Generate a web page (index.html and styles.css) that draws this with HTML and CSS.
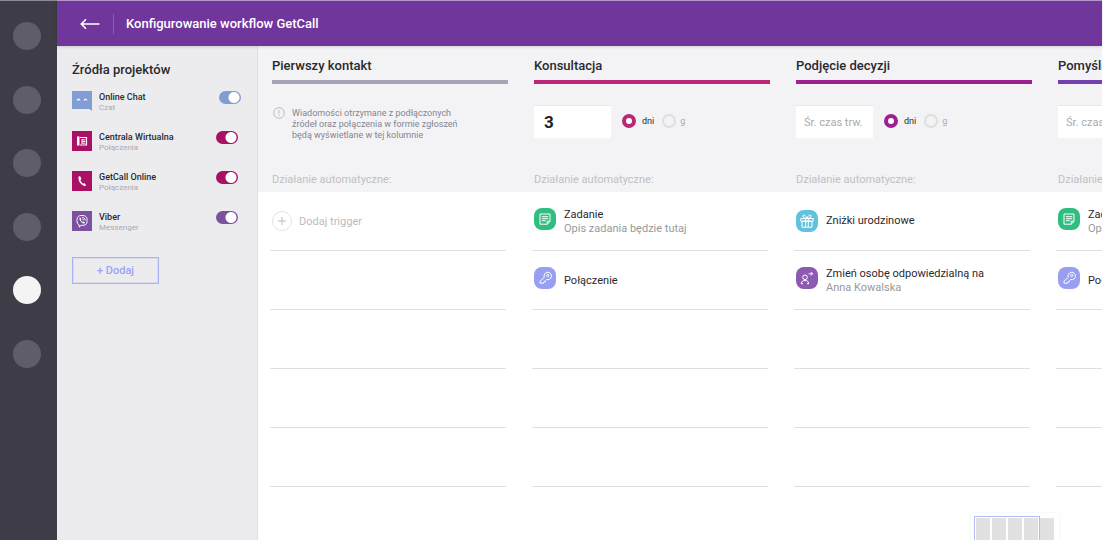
FILE: index.html
```html
<!DOCTYPE html>
<html lang="pl">
<head>
<meta charset="utf-8">
<title>Konfigurowanie workflow GetCall</title>
<link rel="stylesheet" href="styles.css">
</head>
<body>
<svg class="sprite" aria-hidden="true">
  <symbol id="i-task" viewBox="0 0 22 22">
    <path d="M6 6h10v7.500l-2.800 2.700H6z M16 13.200h-2.800v3"/><path d="M7.800 8.700h6.400M7.800 10.700h6.400M7.800 12.700h4"/>
  </symbol>
  <symbol id="i-key" viewBox="0 0 22 22">
    <path d="M10.300 10.300a3.700 3.700 0 1 1 2.300 2.200l-1 .9-.2 1.300-1.500.1-.3 1.400H6v-2z"/><circle cx="13.700" cy="8.500" r="1.100"/>
  </symbol>
  <symbol id="i-gift" viewBox="0 0 22 22">
    <path d="M4.800 8.500h12.400v2.700H4.800zM6 11.200h10v6H6zM9.700 8.500v8.700M12.300 8.500v8.700M11 8.300C9.800 5 7.200 4 6.900 5.900c-.2 1.600 1.700 2.400 4.100 2.400 2.400 0 4.300-.8 4.100-2.400C14.800 4 12.200 5 11 8.300z"/>
  </symbol>
  <symbol id="i-person" viewBox="0 0 22 22">
    <circle cx="9" cy="10.300" r="2.300"/><path d="M5.300 16.700c.2-2.300 1.500-3.200 3.700-3.200s3.500.9 3.700 3.200M5 16.700h2M11 16.700h2M12.500 6.800h4M14.800 5l1.800 1.800-1.800 1.800"/>
  </symbol>
</svg>
<div class="app">
  <nav class="rail" aria-label="Menu">
    <div class="dots">
      <button class="dot" aria-label="Pozycja 1"></button>
      <button class="dot" aria-label="Pozycja 2"></button>
      <button class="dot" aria-label="Pozycja 3"></button>
      <button class="dot" aria-label="Pozycja 4"></button>
      <button class="dot dot-active" aria-label="Pozycja 5"></button>
      <button class="dot" aria-label="Pozycja 6"></button>
    </div>
  </nav>
  <div class="page">
    <header class="topbar">
      <button class="back" aria-label="Wstecz"><svg viewBox="0 0 20 12"><path d="M19.500 6H1.500M6 1.300 1.300 6 6 10.700"/></svg></button>
      <h1 class="title">Konfigurowanie workflow GetCall</h1>
    </header>
    <div class="content">
      <aside class="sources">
        <h2 class="heading">Źródła projektów</h2>
        <ul class="source-list">
          <li class="source blue">
            <svg class="source-icon" viewBox="0 0 20 20"><path class="fill" d="M0 0h20v20l-2.500-2H0z"/><path class="line" d="M5 9.500q1.500-2.600 3 0M12 9.500q1.500-2.600 3 0"/></svg>
            <label class="source-text" for="s1"><span class="source-name">Online Chat</span><span class="source-kind">Czat</span></label>
            <input class="toggle" id="s1" type="checkbox" role="switch" checked>
          </li>
          <li class="source pink">
            <svg class="source-icon" viewBox="0 0 20 20"><path class="fill" d="M0 0h20v20H0z"/><path class="solid" d="M5 5.500h2.500v9H5z"/><path class="line" d="M8 6.500h6.500v7.500H8"/><path class="line thin" d="M10 8.800h3.500M10.300 10.500h3M10.300 12.200h3M10 8v5"/></svg>
            <label class="source-text" for="s2"><span class="source-name">Centrala Wirtualna</span><span class="source-kind">Połączenia</span></label>
            <input class="toggle" id="s2" type="checkbox" role="switch" checked>
          </li>
          <li class="source pink">
            <svg class="source-icon" viewBox="0 0 20 20"><path class="fill" d="M0 0h20v20H0z"/><path class="solid" d="m6.500 5.600 1.700-.3 1.200 2.800-1 1c.6 1.700 1.400 2.700 2.700 3.600l1.200-.6 1.800 1.900-1.200 1.200C8.700 14.200 6 10.300 6.500 5.600z"/></svg>
            <label class="source-text" for="s3"><span class="source-name">GetCall Online</span><span class="source-kind">Połączenia</span></label>
            <input class="toggle" id="s3" type="checkbox" role="switch" checked>
          </li>
          <li class="source violet">
            <svg class="source-icon" viewBox="0 0 20 20"><path class="fill" d="M0 0h20v20H0z"/><path class="line thin" d="M10 4.500c-4 0-5 1.500-5 5 0 2.300.6 3.700 2.200 4.400v2.200l1.900-1.800c4.600.3 6-1 6-4.800 0-3.500-1.100-5-5.100-5z"/><path class="solid" d="m7.300 7 1-.4 1 1.600-.5.800c.4 1 1 1.600 1.900 2l.8-.6 1.500 1.100-.6 1.100C9.900 12.400 7.600 10 7.300 7z"/><path class="line thin" d="M10.300 6.500c1.900.1 2.800 1.200 2.800 3M10.500 8c.8.100 1.100.600 1.100 1.300"/></svg>
            <label class="source-text" for="s4"><span class="source-name">Viber</span><span class="source-kind">Messenger</span></label>
            <input class="toggle" id="s4" type="checkbox" role="switch" checked>
          </li>
        </ul>
        <button class="add-source">+ Dodaj</button>
      </aside>
      <main class="board">
        <div class="stages">
          <section class="stage gray">
            <h2 class="heading stage-heading">Pierwszy kontakt</h2>
            <div class="stage-body">
              <svg class="info" viewBox="0 0 12 12"><circle cx="6" cy="6" r="5.300"/><path d="M6 3v3.700M6 7.800V9"/></svg>
              <p class="note">Wiadomości otrzymane z podłączonych źródeł oraz połączenia w formie zgłoszeń będą wyświetlane w tej kolumnie</p>
            </div>
            <p class="auto">Działanie automatyczne:</p>
          </section>
          <section class="stage magenta">
            <h2 class="heading stage-heading">Konsultacja</h2>
            <div class="stage-body">
              <input class="duration" type="text" value="3" placeholder="Śr. czas trw." aria-label="Średni czas trwania">
              <label class="unit"><input class="radio" type="radio" name="u2" checked>dni</label>
              <label class="unit"><input class="radio" type="radio" name="u2">g</label>
            </div>
            <p class="auto">Działanie automatyczne:</p>
          </section>
          <section class="stage plum">
            <h2 class="heading stage-heading">Podjęcie decyzji</h2>
            <div class="stage-body">
              <input class="duration" type="text" placeholder="Śr. czas trw." aria-label="Średni czas trwania">
              <label class="unit"><input class="radio" type="radio" name="u3" checked>dni</label>
              <label class="unit"><input class="radio" type="radio" name="u3">g</label>
            </div>
            <p class="auto">Działanie automatyczne:</p>
          </section>
          <section class="stage indigo">
            <h2 class="heading stage-heading">Pomyślnie</h2>
            <div class="stage-body">
              <input class="duration" type="text" placeholder="Śr. czas trw." aria-label="Średni czas trwania">
            </div>
            <p class="auto">Działanie automatyczne:</p>
          </section>
        </div>
        <div class="lanes">
          <ul class="lane">
            <li class="slot slot-centered"><button class="add-trigger"><svg class="plus" viewBox="0 0 20 20"><circle cx="10" cy="10" r="9.500"/><path d="M6 10h8M10 6v8"/></svg>Dodaj trigger</button></li>
            <li class="slot"></li><li class="slot"></li><li class="slot"></li><li class="slot"></li>
          </ul>
          <ul class="lane">
            <li class="slot"><svg class="badge green"><use href="#i-task"/></svg><div class="slot-text"><span>Zadanie</span><span class="sub">Opis zadania będzie tutaj</span></div></li>
            <li class="slot"><svg class="badge lilac"><use href="#i-key"/></svg><div class="slot-text"><span>Połączenie</span></div></li>
            <li class="slot"></li><li class="slot"></li><li class="slot"></li>
          </ul>
          <ul class="lane">
            <li class="slot slot-centered"><svg class="badge sky"><use href="#i-gift"/></svg><div class="slot-text"><span>Zniżki urodzinowe</span></div></li>
            <li class="slot"><svg class="badge purple"><use href="#i-person"/></svg><div class="slot-text"><span>Zmień osobę odpowiedzialną na</span><span class="sub">Anna Kowalska</span></div></li>
            <li class="slot"></li><li class="slot"></li><li class="slot"></li>
          </ul>
          <ul class="lane">
            <li class="slot"><svg class="badge green"><use href="#i-task"/></svg><div class="slot-text"><span>Zadanie</span><span class="sub">Opis zadania będzie tutaj</span></div></li>
            <li class="slot"><svg class="badge lilac"><use href="#i-key"/></svg><div class="slot-text"><span>Połączenie</span></div></li>
            <li class="slot"></li><li class="slot"></li><li class="slot"></li>
          </ul>
        </div>
        <div class="minimap" aria-hidden="true">
          <i></i><i></i><i></i><i></i><i></i>
          <div class="viewport"></div>
        </div>
      </main>
    </div>
  </div>
</div>
</body>
</html>
```
FILE: styles.css
```css
* { box-sizing: border-box; }
body { margin: 0; font-family: Roboto, "Liberation Sans", sans-serif; font-size: 11px; color: #29292d; background: #fff; overflow: hidden; }
h1, h2, p, ul { margin: 0; padding: 0; }
ul { list-style: none; }
button { border: 0; padding: 0; background: none; font: inherit; }
svg { flex: none; fill: none; }
.sprite { display: none; }

.app { display: flex; height: 100vh; border-right: 1px solid #fff; }
.rail { flex: none; width: 57px; padding: 21px 0 0 13px; background: #3e3c46; border-top: 1px solid #8c8a92; }
.dots { display: flex; flex-direction: column; justify-content: space-between; height: 346px; }
.dot { flex: none; width: 28px; height: 28px; border-radius: 50%; background: #5f5d67; }
.dot-active { background: #f4f4f4; }
.page { flex: 1; min-width: 0; display: flex; flex-direction: column; }

.topbar { z-index: 1; flex: none; height: 46px; padding-left: 23px; display: flex; align-items: center; gap: 13px; background: #70369c; border-top: 1px solid #b397cb; box-shadow: 0 1px 3px #0002; }
.back { display: flex; }
.back svg { width: 20px; height: 12px; stroke: #fff; stroke-width: 1.6; }
.title { padding-left: 12px; border-left: 1px solid #8c5db0; font-size: 13px; line-height: 20px; font-weight: 500; color: #fff; }
.content { flex: 1; min-height: 0; display: flex; }
.heading { font-size: 13px; line-height: 16px; font-weight: 500; }

.sources { flex: none; width: 201px; padding: 16px 16px 0 15px; background: #ececee; border-right: 1px solid #dfdfe3; }
.source-list { display: flex; flex-direction: column; gap: 18px; padding-top: 13px; }
.source { display: flex; align-items: flex-start; gap: 7px; color: #aa1065; }
.source.blue { color: #829dd4; }
.source.violet { color: #7d519f; }
.source-icon { width: 20px; height: 20px; margin-bottom: 2px; }
.fill { fill: currentColor; }
.solid { fill: #fff; }
.line { stroke: #fff; stroke-width: 1.2; }
.thin { stroke-width: 1; }
.source-text { flex: 1; display: flex; flex-direction: column; height: 22px; }
.source-name { font-size: 9px; line-height: 12px; font-weight: 500; color: #29292d; }
.source-kind { font-size: 8px; line-height: 10px; color: #aaaaae; }
.toggle { appearance: none; flex: none; margin: 0 3px 0 0; width: 22px; height: 13px; border-radius: 7px; color: inherit; background: radial-gradient(circle at 15px 50%, #fff 5px, transparent 6px) currentColor; }
.blue .toggle { margin-right: 0; }
.add-source { width: 87px; height: 27px; margin-top: 24px; border: 1px solid #aab2f1; outline: 1px solid #aab2f144; outline-offset: -2px; font-size: 11px; font-weight: 500; color: #9ba3f2; }

.board { position: relative; flex: 1; min-width: 0; overflow: hidden; }
.stages, .lanes { display: grid; grid-template-columns: repeat(4, 236px); gap: 26px; }
.stages { padding: 12px 14px 5px; width: max-content; min-width: 100%; background: #f3f3f5; }
.lanes { padding-left: 12px; }
.stage { display: flex; flex-direction: column; }
.stage-heading { padding-bottom: 6px; border-bottom: 4px solid var(--tone); }
.gray { --tone: #a5a3b4; }
.magenta { --tone: #b92779; }
.plum { --tone: #9d2290; }
.indigo { --tone: #7340b0; }
.stage-body { height: 54px; margin-top: 21px; display: flex; align-items: flex-start; }
.info { width: 12px; height: 12px; margin: 2px 7px 0 1px; stroke: #bcbcc2; }
.note { max-width: 176px; padding-top: 3px; font-size: 9px; line-height: 11px; color: #858590; }
.duration { width: 77px; height: 33px; padding: 0 10px; border: 0; border-top: 1px solid #e8e8ea; background: #fff; font: 700 17px Roboto, sans-serif; color: #222; }
.duration::placeholder { color: #aaaaae; }
.duration:placeholder-shown { padding: 0 8px; font-size: 11px; font-weight: 400; }
.unit { height: 32px; display: flex; align-items: center; gap: 6px; font-size: 9px; }
.duration + .unit { margin: 0 8px 0 11px; }
.unit + .unit { gap: 4px; color: #aaaaae; }
.radio { appearance: none; width: 14px; height: 14px; margin: 0; border: 2px solid #dfdfe1; border-radius: 50%; }
.radio:checked { border: 4px solid var(--tone); background: #fff; }
.auto { line-height: 14px; margin-top: 14px; color: #c0c0c4; }

.slot { height: 59px; padding: 16px 0 0 2px; display: flex; align-items: flex-start; gap: 8px; border-bottom: 1px solid #dfdfe2; }
.slot-centered { padding-top: 0; align-items: center; }
.slot-text { min-height: 28px; display: flex; flex-direction: column; justify-content: center; line-height: 14px; }
.sub { color: #99999d; }
.badge { width: 22px; height: 22px; border-radius: 8px; stroke: #fff; stroke-width: 1; }
.green { background: #2fbd80; }
.lilac { background: #989ff0; }
.sky { background: #60c2dc; }
.purple { background: #8d5ab1; }
.add-trigger { display: flex; align-items: center; gap: 7px; color: #bbbbbf; }
.plus { width: 20px; height: 20px; }
.plus circle { stroke: #e4e4e7; }
.plus path { stroke: #bbbbbf; }

.minimap { position: absolute; right: 43px; bottom: 0; padding: 5px 5px 0; display: flex; gap: 2px; background: #fff; box-shadow: 0 0 3px #0001; }
.minimap i { width: 14px; height: 22px; background: #e1e1e3; }
.viewport { position: absolute; left: 3px; top: 3px; width: 66px; height: 30px; border: 1px solid #b4baf6; }
```
